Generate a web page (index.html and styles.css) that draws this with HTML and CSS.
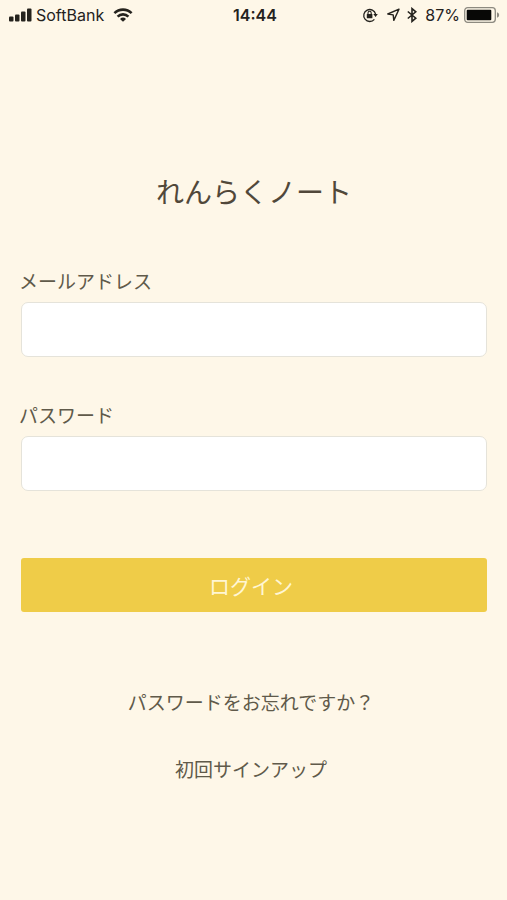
FILE: index.html
```html
<!DOCTYPE html>
<html lang="ja">
<head>
<meta charset="utf-8">
<meta name="viewport" content="width=device-width, initial-scale=1">
<title>れんらくノート</title>
<link rel="stylesheet" href="styles.css">
</head>
<body>
<header class="status">
  <div class="status-group">
    <svg width="24" height="14" viewBox="0 0 24 14" fill="currentColor" aria-hidden="true">
      <rect x="0" y="8.5" width="4.5" height="5" rx="1"/>
      <rect x="6" y="6.5" width="4.5" height="7" rx="1"/>
      <rect x="12" y="3.5" width="4.5" height="10" rx="1"/>
      <rect x="18" y="0.5" width="4.5" height="13" rx="1"/>
    </svg>
    <span class="carrier">SoftBank</span>
    <svg class="wifi" width="20" height="14" viewBox="0 0 20 14" fill="none" stroke="currentColor" stroke-width="2.6" aria-hidden="true">
      <path d="M1.4 5.1a12.3 12.3 0 0 1 17.2 0"/>
      <path d="M4.6 8.6a7.7 7.7 0 0 1 10.8 0"/>
      <path d="M10 13.8 7 10.9a4.3 4.3 0 0 1 6 0z" fill="currentColor" stroke="none"/>
    </svg>
  </div>
  <time class="clock">14:44</time>
  <div class="status-group status-end">
    <svg width="16" height="16" viewBox="0 0 16 16" fill="none" stroke="currentColor" stroke-width="1.3" aria-hidden="true">
      <path d="M12.4 12.3A6 6 0 1 1 13.6 7.2"/>
      <path d="M11.3 7h4.5l-2.2 3z" fill="currentColor" stroke="none"/>
      <rect x="4.8" y="7" width="5.6" height="4.2" rx=".5" fill="currentColor" stroke="none"/>
      <path d="M6 7.2V5.9a1.6 1.6 0 0 1 3.2 0v1.3" stroke-width="1.1"/>
    </svg>
    <svg class="location" width="14" height="14" viewBox="0 0 14 14" fill="none" stroke="currentColor" stroke-width="1.4" stroke-linejoin="round" aria-hidden="true">
      <path d="M13 1.2 1.8 6l5.4.9.6 5.5z"/>
    </svg>
    <svg class="bluetooth" width="10" height="16" viewBox="0 0 10 16" fill="none" stroke="currentColor" stroke-width="1.6" aria-hidden="true">
      <path d="M.8 4.5 8.8 11.2 5 14.4V1.6l3.8 3.2L.8 11.5"/>
    </svg>
    <span class="percent">87%</span>
    <svg width="36" height="16" viewBox="0 0 36 16" aria-hidden="true">
      <rect x=".7" y=".7" width="30.6" height="14.6" rx="3" fill="none" stroke="#8d8a80" stroke-width="1.3"/>
      <rect x="2.7" y="2.7" width="24.6" height="10.6" rx="1" fill="#080806"/>
      <path d="M33 5.2q2.2.8 2.2 2.8T33 10.8z" fill="#8d8a80"/>
    </svg>
  </div>
</header>
<main class="login">
  <h1>れんらくノート</h1>
  <form>
    <div class="field">
      <label for="email">メールアドレス</label>
      <input id="email" type="email">
    </div>
    <div class="field">
      <label for="password">パスワード</label>
      <input id="password" type="password">
    </div>
    <button type="submit">ログイン</button>
  </form>
  <nav class="links">
    <a href="#reset">パスワードをお忘れですか？</a>
    <a href="#signup">初回サインアップ</a>
  </nav>
</main>
</body>
</html>
```
FILE: styles.css
```css
* {
  box-sizing: border-box;
}

body {
  margin: 0;
  min-height: 100vh;
  background: #fef7e8;
  color: #605a4a;
  font-family: "Noto Sans CJK JP", sans-serif;
  font-weight: 400;
}

.status {
  display: grid;
  grid-template-columns: 1fr auto 1fr;
  align-items: center;
  height: 30px;
  padding: 0 7px 0 9px;
  color: #24221d;
  font: 400 16px/20px Inter, sans-serif;
}

.status-group {
  display: flex;
  align-items: center;
}

.status-end {
  justify-content: flex-end;
}

.carrier {
  margin-left: 3px;
}

.wifi {
  margin-left: 9px;
}

.clock {
  padding-left: 1px;
  font-weight: 600;
}

.location {
  margin-left: 8px;
}

.bluetooth {
  margin-left: 7px;
}

.percent {
  margin: 0 4px 0 8px;
}

.login {
  padding: 141px 20px 40px 21px;
}

h1 {
  margin: 0 0 56px;
  color: #51483a;
  font-size: 28px;
  font-weight: 400;
  line-height: 40px;
  text-align: center;
}

.field {
  display: flex;
  flex-direction: column;
  gap: 7px;
  margin-bottom: 44px;
}

label {
  margin-left: -2px;
  font-size: 19px;
  line-height: 28px;
}

input {
  width: 100%;
  height: 55px;
  padding: 0 14px;
  border: 1px solid #e5e3da;
  border-radius: 7px;
  background: #fff;
  color: inherit;
  font: inherit;
  font-size: 19px;
}

button {
  width: 100%;
  height: 54px;
  margin-top: 23px;
  padding: 0 6px 0 0;
  border: 0;
  border-radius: 3px;
  background: #efcc48;
  color: #fff6d3;
  font: inherit;
  font-size: 21px;
}

.links {
  display: flex;
  flex-direction: column;
  align-items: center;
  gap: 39px;
  margin-top: 76px;
  padding-right: 6px;
}

.links a {
  color: inherit;
  font-size: 19px;
  line-height: 28px;
  text-decoration: none;
}
```
